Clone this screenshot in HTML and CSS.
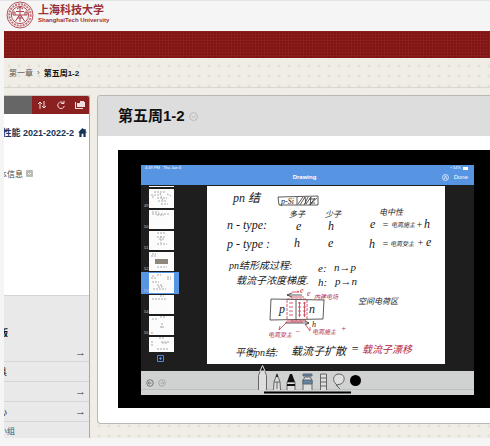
FILE: index.html
```html
<!DOCTYPE html>
<html lang="zh-CN">
<head>
<meta charset="utf-8">
<meta name="viewport" content="width=device-width, initial-scale=1">
<title>第五周1-2</title>
<link rel="stylesheet" href="styles.css">
</head>
<body>
<header class="brand">
  <svg class="seal" viewBox="0 0 28 28" aria-hidden="true">
    <circle cx="14" cy="14" r="13" class="seal-line"/>
    <circle cx="14" cy="14" r="10.7" class="seal-band"/>
    <circle cx="14" cy="14" r="8.6" class="seal-line"/>
    <path class="seal-mark" d="M14 6v15M10 10.5h8M9 14h10M13.500 14L9.500 20M14.500 14L18.500 20M11 8l3-2 3 2M7 11h2v3H7zM19 11h2v3h-2zM11 17h6"/>
  </svg>
  <div class="brand-name">
    <span class="brand-zh">上海科技大学</span>
    <span class="brand-en">ShanghaiTech University</span>
  </div>
</header>
<div class="site">
  <div class="red-band"></div>
  <nav class="crumbs" aria-label="路径">
    <a href="#">第一章</a><span class="sep">›</span><strong>第五周1-2</strong>
  </nav>
  <div class="columns">
    <aside class="side">
      <div class="tools">
        <button type="button" aria-label="排序"><svg viewBox="0 0 10 10"><path d="M3 9V2M1 4l2-2 2 2M7 1v7M5 6l2 2 2-2"/></svg></button>
        <button type="button" aria-label="刷新"><svg viewBox="0 0 10 10"><path d="M7.500 3A3.300 3.300 0 1 0 8.300 6M8 .8V3.500H5.200"/></svg></button>
        <button type="button" aria-label="文件夹"><svg viewBox="0 0 10 10"><path class="solid" d="M0 2h1v6h7v1H0zM2 3h3V1h4v1h1v5H2z"/></svg></button>
      </div>
      <div class="course">
        <a class="course-title" href="#"><span>理性能 2021-2022-2</span></a>
        <svg class="home" viewBox="0 0 10 10" aria-hidden="true"><path d="M5 0L0 5h1.500v5H4V6.500h2V10h2.500V5H10L8.500 3.500V1H7v1z"/></svg>
      </div>
      <div class="info">
        <a class="clip info-text" href="#"><span>本信息</span></a>
        <svg class="toggle" viewBox="0 0 7 7" aria-hidden="true"><rect width="7" height="7" rx="1"/><path d="M2 3l1.500 1.500L5 3"/></svg>
      </div>
      <ul class="menu">
        <li class="tall"><a class="clip stub" href="#"><span>版</span></a><span class="arrow">→</span></li>
        <li><a class="clip tiny" href="#"><span>具</span></a></li>
        <li><span></span><span class="arrow">→</span></li>
        <li><a class="clip tiny" href="#"><span>心</span></a><span class="arrow">→</span></li>
        <li class="last"><a class="clip group" href="#"><span>小组</span></a></li>
      </ul>
    </aside>
    <main class="content">
      <div class="title-bar">
        <h1>第五周1-2</h1>
        <button class="more" type="button" aria-label="更多选项"><svg viewBox="0 0 9 9"><circle cx="4.500" cy="4.500" r="4"/><path d="M2.500 3.700l2 2 2-2"/></svg></button>
      </div>
      <div class="content-body">
        <section class="video">
          <div class="app">
            <div class="app-bar">
              <div class="status">
                <span>4:49 PM &nbsp; Thu Jan 6</span>
                <span class="battery">⌁ 54% <i></i></span>
              </div>
              <div class="app-row">
                <span></span>
                <span class="app-name">Drawing</span>
                <span class="app-done"><svg viewBox="0 0 8 8" aria-hidden="true"><circle cx="4" cy="4" r="3.400"/><path d="M2.500 6L4 2l1.500 4"/></svg><button type="button">Done</button></span>
              </div>
            </div>
            <div class="desk">
              <ol class="thumbs">
                <li class="sliver"><span></span><b></b></li>
                <li><span>49</span><b><svg viewBox="0 0 25 19"><path d="M5 3h12M2 6h8M8 9h10M3 8h3M9 12h9M12 15h7M18 5l4 2M11 4l3 8"/></svg></b></li>
                <li><span>50</span><b><svg viewBox="0 0 25 19"><path d="M3 2h7M3 4h17M8 5h7"/></svg></b></li>
                <li><span>51</span><b><svg viewBox="0 0 25 19"><path d="M8 2h8M8 6h9M10 8h5M12 5v7M8 13h10"/></svg></b></li>
                <li><span>52</span><b><svg viewBox="0 0 25 19"><path d="M3 2h4M2 4h5M8 15h10"/><rect x="6" y="7" width="13" height="5" class="photo"/></svg></b></li>
                <li class="on"><span>53</span><b><svg viewBox="0 0 25 19"><path d="M3 3h3M8 2h4M2 5h6M18 4h4M18 6h4M3 9h7M8 12h5v2H8M4 16h13"/></svg></b></li>
                <li><span>54</span><b><svg viewBox="0 0 25 19"><path d="M11 1h4M3 4h15"/></svg></b></li>
                <li><span>55</span><b><svg viewBox="0 0 25 19"><path d="M11 1h5M3 3h5M13 7v5M11 11h4M2 17h3"/></svg></b></li>
                <li class="short"><span></span><b><svg viewBox="0 0 25 14"><path d="M10 1h6M3 4v6M12 5h9M13 6h6M8 12h11"/></svg></b></li>
              </ol>
              <button class="add" type="button" aria-label="添加页面"><svg viewBox="0 0 7 7"><path d="M.5.500h6v6h-6zM3.500 2v3M2 3.500h3"/></svg></button>
              <svg class="paper" viewBox="207 186 238 178" role="img" aria-label="pn 结笔记">
                <rect class="sheet" x="207" y="186" width="238" height="178"/>
                <g class="ink">
                  <text x="233" y="202" class="t12">pn 结</text>
                  <text x="281" y="204" class="t8">p-Si</text>
                  <text x="289" y="217" class="t8">多子</text>
                  <text x="325" y="217" class="t8">少子</text>
                  <text x="379" y="215" class="t8">电中性</text>
                  <text x="227" y="229" class="t12">n - type:</text>
                  <text x="296" y="230" class="t12">e</text>
                  <text x="328" y="230" class="t12">h</text>
                  <text x="370" y="228" class="t12">e</text>
                  <text x="382" y="228" class="t10">=</text>
                  <text x="391" y="227" class="t6">电离施主</text>
                  <text x="416" y="228" class="t10">+</text>
                  <text x="424" y="228" class="t12">h</text>
                  <text x="227" y="248" class="t12">p - type :</text>
                  <text x="294" y="247" class="t12">h</text>
                  <text x="328" y="247" class="t12">e</text>
                  <text x="369" y="248" class="t12">h</text>
                  <text x="382" y="247" class="t10">=</text>
                  <text x="390" y="246" class="t6">电离受主</text>
                  <text x="417" y="246" class="t10">+</text>
                  <text x="426" y="246" class="t12">e</text>
                  <text x="229" y="269" class="t10">pn结形成过程:</text>
                  <text x="236" y="284" class="t10">载流子浓度梯度.</text>
                  <text x="318" y="272" class="t11">e:</text><text x="334" y="271" class="t11">n→p</text>
                  <text x="318" y="286" class="t11">h:</text><text x="335" y="285" class="t11">p→n</text>
                  <text x="279" y="313" class="t12">p</text>
                  <text x="309" y="313" class="t12">n</text>
                  <text x="312" y="327" class="t8">h</text>
                  <text x="358" y="304" class="t8">空间电荷区</text>
                  <text x="235" y="356" class="t10">平衡pn结:</text>
                  <text x="291" y="355" class="t11">载流子扩散</text>
                  <text x="351" y="353" class="t12">=</text>
                </g>
                <g class="ink red">
                  <text x="300" y="293" class="t8">e</text>
                  <text x="307" y="296" class="t8">e</text>
                  <text x="314" y="299" class="t6">内建电场</text>
                  <text x="268" y="337" class="t6">电离受主</text><text x="295" y="334" class="t8">−</text>
                  <text x="312" y="334" class="t6">电离施主</text><text x="341" y="331" class="t8">+</text>
                  <text x="362" y="353" class="t10">载流子漂移</text>
                </g>
                <path class="stroke" d="M278 197l40-1v9h-39zM297 197v8M298 204l5-7M300 205l5-8 1 7 5-7-1 8 5-7M304 205l4-8M309 199h6M311 203h4M317 198l-7 6M271 299l53 1-1 19-53 1zM296 300v20"/>
                <path class="stroke dark" d="M287 295h15M287 295l5-2M287 295l5 2M285 323h24M309 323l-4-2M309 323l-4 2"/>
                <path class="stroke crimson" d="M292 292h7l-2-1M290 297h14M286 322h17M290 321h16M287 322l-8 8 1-4M305 324l5 7v-4"/>
                <path class="stroke crimson dashed" d="M287 300v20M307 300v20M287 299h20M287 320h20"/>
                <path class="stroke crimson" d="M289 303h4M289 307h4M289 311h4M289 315h4M298 303h3M298 307h3M298 311h3M298 315h3M303 303h3M303 307h3M303 311h3M303 315h3M299.500 302v15M304.500 302v15"/>
              </svg>
            </div>
            <div class="dock">
              <svg class="undo" viewBox="0 0 20 8" aria-hidden="true"><circle cx="4" cy="4" r="3.300"/><path d="M2 4h3.500M3.500 2.500L2 4l1.500 1.500"/><g class="faint"><circle cx="16" cy="4" r="3.300"/><path d="M14.500 4H18M16.500 2.500L18 4l-1.500 1.500"/></g></svg>
              <svg class="pens" viewBox="256 364 108 31" aria-hidden="true">
                <path class="pen" d="M258.500 390V375.500L262.500 365.500L266.500 375.500V390"/>
                <path class="tip" d="M260 371L262.500 365.500L265 371z"/>
                <path class="pen" d="M273.500 390L274 382L277 374L280 382L280.500 390M274 382h6M277 382v7"/>
                <path class="blackfill" d="M276 377l1-4 1 4z"/>
                <path class="pen" d="M287 390v-8h8v8"/>
                <path class="blackfill" d="M287 382l3-8h2l3 8zM287 384h8v2h-8z"/>
                <path class="pen" d="M303 390v-10l2-3h5l2 3v10"/>
                <path class="bluefill" d="M303 380h9v4h-9zM303 374h9v2h-9z"/>
                <path class="pen" d="M320.500 390v-16h6v16M320.500 378h6M320.500 382h6M320.500 386h6"/>
                <path class="pen" d="M338 387l-2-3c-4-3-3-10 3-10s7 7 2 10l-5 1 4 4"/>
                <circle cx="355.500" cy="380.500" r="5.500"/>
                <path class="base" d="M264 392.500h87"/>
              </svg>
            </div>
          </div>
        </section>
      </div>
    </main>
  </div>
</div>
</body>
</html>
```
FILE: styles.css
```css
* { box-sizing: border-box; }

body {
  margin: 0;
  background: #f6f5f5;
  color: #111;
  font-family: "Liberation Sans", "Noto Sans CJK SC", sans-serif;
  font-size: 9px;
}

a { color: inherit; text-decoration: none; }
button { margin: 0; padding: 0; border: 0; background: none; color: inherit; font: inherit; }
svg { display: block; fill: none; }

.brand {
  display: flex;
  gap: 4px;
  height: 31px;
  padding: 0 6px;
  border-top: 1px solid #e4e4e4;
  background: #f5f5f6;
}
.seal { width: 28px; height: 28px; }
.seal-line { stroke: #b2545a; }
.seal-band { stroke: #c4767b; stroke-width: 2; stroke-dasharray: 2 1; }
.seal-mark { stroke: #ad464d; }
.brand-name { display: flex; flex-direction: column; padding-top: 3px; color: #9b3038; font-weight: bold; }
.brand-zh { font-size: 11px; line-height: 12px; }
.brand-en { font-size: 6px; line-height: 8px; }

.site {
  margin-left: 4px;
  background-color: #efede6;
  background-image: radial-gradient(circle, #e3e0d8 1px, transparent 2px);
  background-size: 10px 10px;
}
.red-band {
  height: 27px;
  background:
    repeating-linear-gradient(90deg, transparent 0 2px, #8b1e1c 2px 3px),
    repeating-linear-gradient(0deg, #7f1513 0 2px, #8b1e1c 2px 3px);
}
.crumbs {
  display: flex;
  align-items: center;
  gap: 4px;
  height: 30px;
  padding: 0 5px;
  border-bottom: 1px solid #d9d7d0;
  font-size: 8px;
  color: #555;
}
.crumbs strong { color: #111; }
.columns {
  display: grid;
  grid-template-columns: 86px minmax(0, 1fr);
  gap: 7px;
  padding-top: 7px;
}

.side {
  overflow: hidden;
  border-right: 1px solid #aaa9a5;
  border-top: 1px solid #c9c7c2;
  border-top-right-radius: 3px;
  background: #fff;
}
.tools { display: flex; justify-content: flex-end; height: 18px; background: #666; }
.tools button { display: grid; place-items: center; width: 19px; background: #8b2020; }
.tools svg { width: 10px; height: 10px; stroke: #f3dede; stroke-width: 1; }
.tools .solid { fill: #f3dede; stroke: none; }
.course { display: flex; gap: 4px; align-items: center; height: 37px; color: #173457; font-weight: bold; }
.course-title, .clip { display: flex; justify-content: flex-end; overflow: hidden; white-space: nowrap; }
.course-title { width: 70px; }
.course-title span, .clip span { flex: none; }
.home { width: 9px; height: 9px; fill: #173457; }
.info { display: flex; gap: 3px; align-items: center; height: 44px; margin-bottom: 100px; color: #444; }
.info-text { width: 19px; font-size: 8px; }
.toggle { width: 7px; height: 7px; }
.toggle rect { fill: #b9bbb4; }
.toggle path { stroke: #fff; }

.menu { margin: 0; padding: 0; list-style: none; border-top: 1px solid #d5d5d5; background: #e9e9ea; }
.menu li {
  display: flex;
  align-items: center;
  justify-content: space-between;
  height: 20px;
  padding-right: 3px;
  border-bottom: 1px solid #d5d5d6;
}
.menu .tall { height: 66px; padding-top: 8px; font-weight: bold; }
.menu .tall .arrow { align-self: flex-end; padding-bottom: 2px; }
.menu .last { height: 16px; border: 0; color: #315a76; }
.stub { width: 4px; }
.tiny { width: 3px; }
.group { width: 11px; font-size: 8px; }
.arrow { color: #333; font: 11px/13px "Liberation Sans", sans-serif; }

.content {
  align-self: start;
  border: 1px solid #b9b8b4;
  border-right: 0;
  border-radius: 4px 0 0 4px;
  background: #fff;
}
.title-bar { display: flex; align-items: center; gap: 4px; height: 40px; padding-left: 20px; border-radius: 3px 0 0; background: #ddd; }
h1 { margin: 0; font-size: 15px; line-height: 20px; }
.more svg { width: 9px; height: 9px; stroke: #b9b9b9; }
.content-body { padding: 14px 0 15px 20px; }
.video { padding: 15px 16px 13px 23px; background: #000; }

.app { background: #1e1e1f; color: #fff; }
.app-bar { height: 20px; background: #5795e3; }
.status { display: flex; justify-content: space-between; padding: 0 6px 0 4px; font-size: 4px; line-height: 6px; }
.battery { display: flex; align-items: center; gap: 2px; }
.battery i { width: 5px; height: 3px; background: #fff; }
.app-row { display: grid; grid-template-columns: 1fr auto 1fr; align-items: center; padding-right: 6px; font-size: 6px; line-height: 13px; }
.app-name { font-weight: bold; }
.app-done { display: flex; justify-content: flex-end; align-items: center; gap: 5px; }
.app-done svg { width: 7px; height: 7px; stroke: #dce9fb; stroke-width: 1; }

.desk {
  display: grid;
  grid-template-columns: 38px minmax(0, 1fr);
  grid-template-rows: auto 1fr;
  column-gap: 28px;
  padding: 0 29px 7px 0;
}
.thumbs { margin: 0; padding: 0; list-style: none; }
.thumbs li { display: grid; grid-template-columns: 8px 25px; height: 21px; padding: 1px 0; }
.thumbs span { align-self: end; padding-left: 3px; color: #c8c8c8; font-size: 4px; line-height: 4px; }
.thumbs b { background: #fcfcfc; }
.thumbs path { stroke: #aaa; stroke-dasharray: 2 1; stroke-width: 1; }
.thumbs .photo { fill: #8e877a; }
.thumbs .sliver { height: 3px; overflow: hidden; }
.thumbs .on { height: 22px; background: #5795e3; }
.thumbs .short { height: 17px; }
.add { justify-self: center; align-self: start; margin-top: 2px; }
.add svg { width: 7px; height: 7px; stroke: #4f88d6; }
.paper { grid-column: 2; grid-row: 1 / 3; width: 100%; margin-top: 1px; }
.sheet { fill: #fff; }
.ink { fill: #171717; font-family: "Liberation Serif", "Noto Sans CJK SC", serif; font-style: italic; }
.red { fill: #b3223d; }
.t6 { font-size: 6px; }
.t8 { font-size: 8px; }
.t10 { font-size: 10px; }
.t11 { font-size: 11px; }
.t12 { font-size: 12px; }
.stroke { stroke: #333; stroke-width: 0.800; }
.crimson { stroke: #c43a50; }
.dashed { stroke-dasharray: 3 1; }

.dock {
  display: grid;
  grid-template-columns: 1fr auto 1fr;
  grid-template-rows: 24px;
  align-items: end;
  height: 24px;
  background: linear-gradient(#d0d1d1 0 18px, #bfc0c0 18px 19px, #d2d3d3 19px);
}
.undo { align-self: center; width: 20px; height: 8px; margin-left: 5px; stroke: #777; stroke-width: 1; }
.faint { stroke: #aaa; }
.pens { width: 108px; height: 31px; margin-left: 4px; }
.pen { fill: #dededf; stroke: #666; }
.tip { fill: #111; stroke: #ddd; }
.blackfill { fill: #111; }
.pens circle { fill: #000; }
.bluefill { fill: #6683a0; stroke: #596b7c; }
.base { stroke: #000; stroke-width: 2; }
```
